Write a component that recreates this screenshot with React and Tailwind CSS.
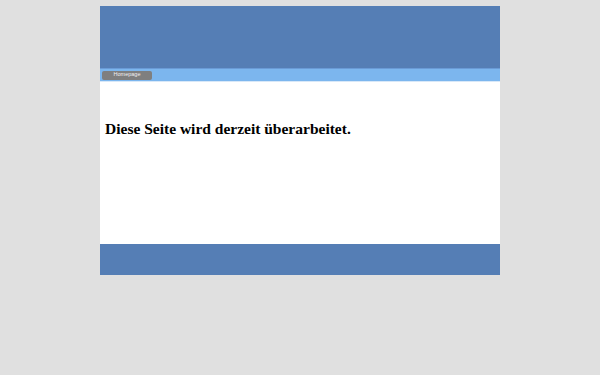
import React from "react";

const App = () => {
  return (
    <div className="min-h-[375px] w-full bg-[#e0e0e0] pt-[6px]">
      <div className="mx-auto w-[400px]">
        <div className="h-[62px] bg-[#557eb5]" />
        <div className="h-[1px] bg-[#6a9bd6]" />
        <div className="flex h-[12px] items-center bg-[#7cb6ee] px-[2px]">
          <div className="flex h-[9px] w-[50px] items-center justify-center rounded-[2px] bg-[#7f7f7f] text-[5.5px] leading-none text-[#f0f0f0] font-['Liberation_Sans',sans-serif]">
            Homepage
          </div>
        </div>
        <div className="h-[1px] bg-[#d8e8f8]" />
        <div className="h-[162px] bg-white px-[5px] pt-[37px]">
          <h1 className="text-[15.5px] font-bold leading-[20px] text-black font-['Liberation_Serif',serif]">
            Diese Seite wird derzeit überarbeitet.
          </h1>
        </div>
        <div className="h-[31px] bg-[#557eb5]" />
      </div>
    </div>
  );
};

export default App;
